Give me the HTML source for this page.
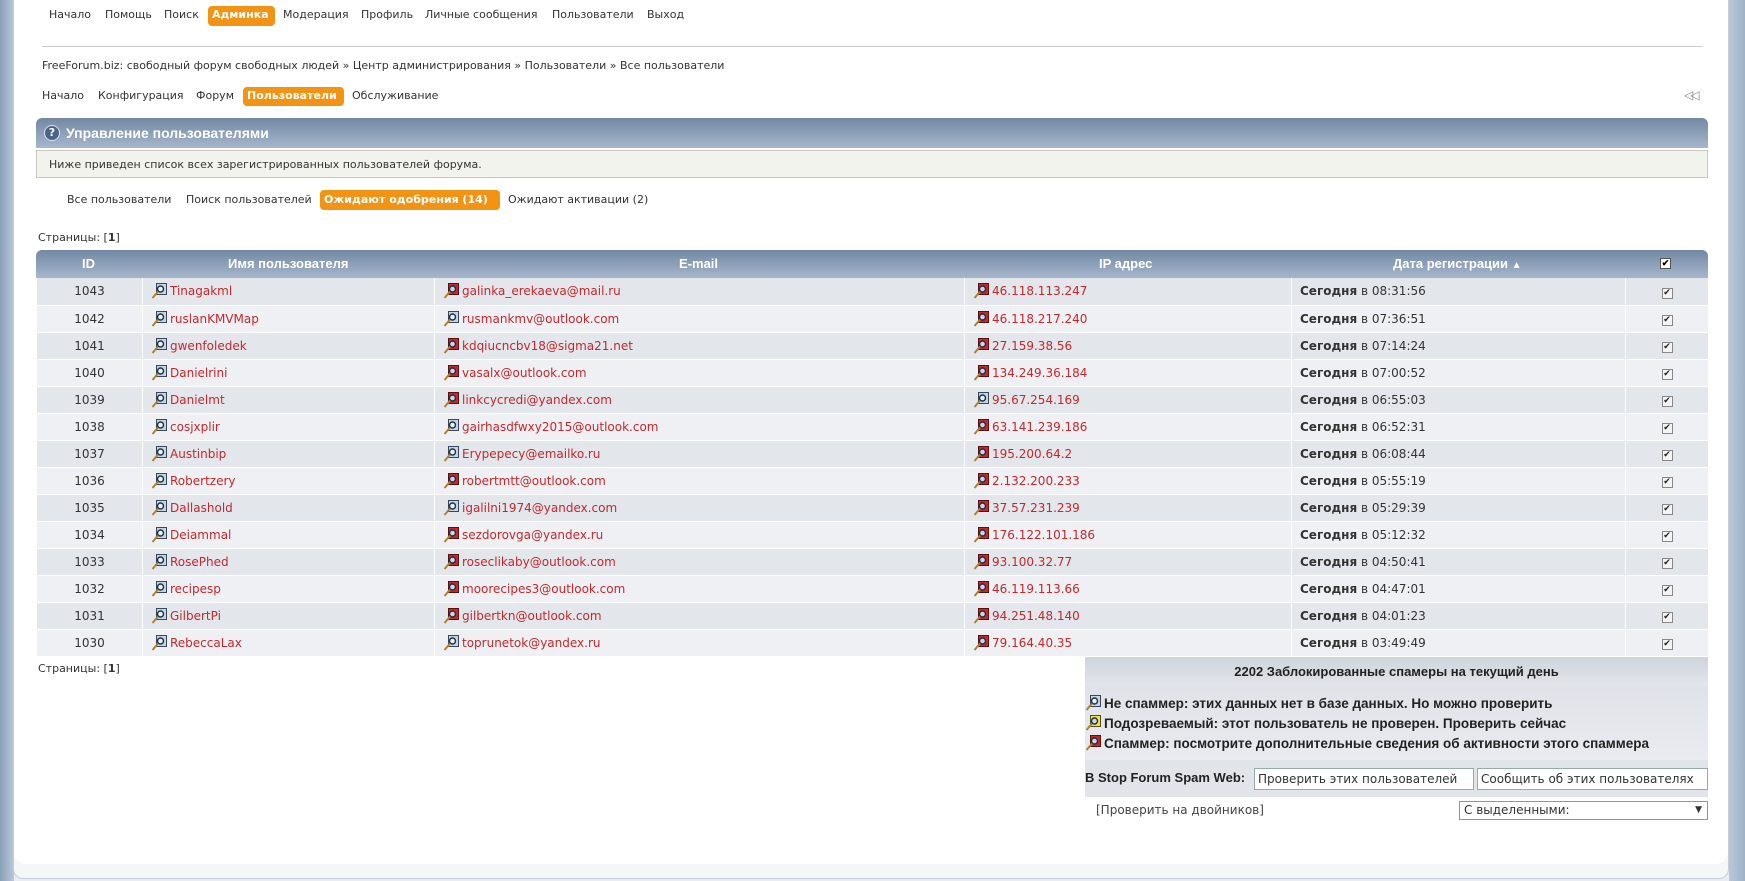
<!DOCTYPE html>
<html><head><meta charset="utf-8"><style>
*{box-sizing:border-box;margin:0;padding:0}
body{width:1745px;height:881px;overflow:hidden;background:linear-gradient(90deg,#8aa0b8 0,#b9c8d8 14px,#e9edf2 14px,#e9edf2 1729px,#b9c8d8 1729px,#9fb2c6 1745px);font-family:"DejaVu Sans","Liberation Sans",sans-serif;font-size:11px;color:#333;position:relative}
.outer{position:absolute;left:13px;top:0;width:1716px;height:879px;background:#f4f6f8;border:1px solid #c8ced6;border-top:none;border-radius:0 0 10px 10px}
.inner{position:absolute;left:14px;top:0;width:1714px;height:864px;background:#fff;border-radius:0 0 12px 12px}
.a{position:absolute;white-space:nowrap}
.btn{background:#f39314;color:#fff;font-weight:bold;border-radius:4px;padding:2px 4px}
.hdr{position:absolute;left:36px;width:1672px;background:linear-gradient(#7388a4,#a6b7cc);border-radius:6px 6px 0 0;color:#fff;font-weight:bold;font-family:"Liberation Sans",sans-serif}
table{position:absolute;left:36px;top:278px;width:1672px;border-collapse:collapse;table-layout:fixed}
td{height:27px;border:1px solid #fff;border-top:none;font-size:12px;padding:0 0 0 8px;white-space:nowrap;vertical-align:middle}
tr:nth-child(odd) td{background:#e3e6eb}
tr:nth-child(even) td{background:#eef0f3}
td.c{text-align:center;padding:0}
a{color:#c4282d;text-decoration:none}
.ic{display:inline-block;width:16px;height:18px;vertical-align:-5px;margin-right:3px}
.ck{display:inline-block;width:11px;height:11px;border:1px solid #888;background:#f4f4f4;font-size:9px;line-height:9px;text-align:center;color:#222}
</style></head><body>
<div class="outer"></div><div class="inner"></div>
<svg width="0" height="0" style="position:absolute"><defs>
<g id="ib"><rect x="5.5" y="1.5" width="10" height="11" fill="#c7d4e4" stroke="#38485c"/><circle cx="9.5" cy="7" r="3" fill="#e8f0fa" stroke="#203040" stroke-width="1.4"/><line x1="7" y1="9.5" x2="1.5" y2="16" stroke="#b08030" stroke-width="2"/></g>
<g id="ir"><rect x="5.5" y="1.5" width="10" height="11" fill="#c8262a" stroke="#5a1010"/><circle cx="9.5" cy="7" r="3" fill="#c8d8ec" stroke="#203040" stroke-width="1.4"/><line x1="7" y1="9.5" x2="1.5" y2="16" stroke="#b08030" stroke-width="2"/></g>
<g id="iy"><rect x="5.5" y="1.5" width="10" height="11" fill="#f0e040" stroke="#505020"/><circle cx="9.5" cy="7" r="3" fill="#c8d8ec" stroke="#203040" stroke-width="1.4"/><line x1="7" y1="9.5" x2="1.5" y2="16" stroke="#b08030" stroke-width="2"/></g>
</defs></svg>

<div class="a" style="left:49px;top:8px">Начало</div>
<div class="a" style="left:105px;top:8px">Помощь</div>
<div class="a" style="left:164px;top:8px">Поиск</div>
<div class="a btn" style="left:208px;top:6px;width:67px;height:20px;font-size:11px">Админка</div>
<div class="a" style="left:283px;top:8px">Модерация</div>
<div class="a" style="left:361px;top:8px">Профиль</div>
<div class="a" style="left:425px;top:8px">Личные сообщения</div>
<div class="a" style="left:552px;top:8px">Пользователи</div>
<div class="a" style="left:647px;top:8px">Выход</div>
<div class="a" style="left:42px;top:46px;width:1661px;height:1px;background:#ccc"></div>
<div class="a" style="left:42px;top:59px">FreeForum.biz: свободный форум свободных людей » Центр администрирования » Пользователи » Все пользователи</div>
<div class="a" style="left:42px;top:89px">Начало</div>
<div class="a" style="left:98px;top:89px">Конфигурация</div>
<div class="a" style="left:196px;top:89px">Форум</div>
<div class="a btn" style="left:243px;top:87px;width:101px;height:19px">Пользователи</div>
<div class="a" style="left:352px;top:89px">Обслуживание</div>
<div class="a" style="left:1684px;top:88px;color:#888;font-size:12px;letter-spacing:-3px">◁◁</div>

<div class="hdr" style="top:118px;height:30px;font-size:14px;line-height:30px;padding-left:30px">Управление пользователями</div>
<div class="a" style="left:44px;top:125px;width:16px;height:16px;border-radius:50%;background:#4a6488;border:1px solid #dde;color:#fff;font-size:11px;font-weight:bold;text-align:center;line-height:14px">?</div>
<div class="a" style="left:36px;top:150px;width:1672px;height:28px;background:#f3f3ee;border:1px solid #c8c8c0"></div>
<div class="a" style="left:49px;top:158px">Ниже приведен список всех зарегистрированных пользователей форума.</div>

<div class="a" style="left:67px;top:193px">Все пользователи</div>
<div class="a" style="left:186px;top:193px">Поиск пользователей</div>
<div class="a btn" style="left:320px;top:190px;width:180px;height:20px;padding-top:3px">Ожидают одобрения (14)</div>
<div class="a" style="left:508px;top:193px">Ожидают активации (2)</div>
<div class="a" style="left:38px;top:231px">Страницы: [<b>1</b>]</div>

<div class="hdr" style="top:250px;height:28px;font-size:13px;line-height:28px">
<span class="a" style="left:46px">ID</span><span class="a" style="left:192px">Имя пользователя</span><span class="a" style="left:643px">E-mail</span><span class="a" style="left:1063px">IP адрес</span><span class="a" style="left:1357px">Дата регистрации <span style="font-size:10px">▲</span></span><span class="a" style="left:1624px;top:8px;width:11px;height:11px;background:#fff;border:1px solid #555;color:#000;font-size:9px;line-height:9px;text-align:center">✔</span>
</div>

<table>
<colgroup><col style="width:106px"><col style="width:292px"><col style="width:530px"><col style="width:327px"><col style="width:334px"><col style="width:83px"></colgroup>
<tbody>
<tr><td class="c">1043</td><td><svg class="ic"><use href="#ib"/></svg><a>Tinagakml</a></td><td><svg class="ic"><use href="#ir"/></svg><a>galinka_erekaeva@mail.ru</a></td><td><svg class="ic"><use href="#ir"/></svg><a>46.118.113.247</a></td><td><b>Сегодня</b> в 08:31:56</td><td class="c"><span class="ck">✔</span></td></tr>
<tr><td class="c">1042</td><td><svg class="ic"><use href="#ib"/></svg><a>ruslanKMVMap</a></td><td><svg class="ic"><use href="#ib"/></svg><a>rusmankmv@outlook.com</a></td><td><svg class="ic"><use href="#ir"/></svg><a>46.118.217.240</a></td><td><b>Сегодня</b> в 07:36:51</td><td class="c"><span class="ck">✔</span></td></tr>
<tr><td class="c">1041</td><td><svg class="ic"><use href="#ib"/></svg><a>gwenfoledek</a></td><td><svg class="ic"><use href="#ir"/></svg><a>kdqiucncbv18@sigma21.net</a></td><td><svg class="ic"><use href="#ir"/></svg><a>27.159.38.56</a></td><td><b>Сегодня</b> в 07:14:24</td><td class="c"><span class="ck">✔</span></td></tr>
<tr><td class="c">1040</td><td><svg class="ic"><use href="#ib"/></svg><a>Danielrini</a></td><td><svg class="ic"><use href="#ir"/></svg><a>vasalx@outlook.com</a></td><td><svg class="ic"><use href="#ir"/></svg><a>134.249.36.184</a></td><td><b>Сегодня</b> в 07:00:52</td><td class="c"><span class="ck">✔</span></td></tr>
<tr><td class="c">1039</td><td><svg class="ic"><use href="#ib"/></svg><a>Danielmt</a></td><td><svg class="ic"><use href="#ir"/></svg><a>linkcycredi@yandex.com</a></td><td><svg class="ic"><use href="#ib"/></svg><a>95.67.254.169</a></td><td><b>Сегодня</b> в 06:55:03</td><td class="c"><span class="ck">✔</span></td></tr>
<tr><td class="c">1038</td><td><svg class="ic"><use href="#ib"/></svg><a>cosjxplir</a></td><td><svg class="ic"><use href="#ib"/></svg><a>gairhasdfwxy2015@outlook.com</a></td><td><svg class="ic"><use href="#ir"/></svg><a>63.141.239.186</a></td><td><b>Сегодня</b> в 06:52:31</td><td class="c"><span class="ck">✔</span></td></tr>
<tr><td class="c">1037</td><td><svg class="ic"><use href="#ib"/></svg><a>Austinbip</a></td><td><svg class="ic"><use href="#ib"/></svg><a>Erypepecy@emailko.ru</a></td><td><svg class="ic"><use href="#ir"/></svg><a>195.200.64.2</a></td><td><b>Сегодня</b> в 06:08:44</td><td class="c"><span class="ck">✔</span></td></tr>
<tr><td class="c">1036</td><td><svg class="ic"><use href="#ib"/></svg><a>Robertzery</a></td><td><svg class="ic"><use href="#ir"/></svg><a>robertmtt@outlook.com</a></td><td><svg class="ic"><use href="#ir"/></svg><a>2.132.200.233</a></td><td><b>Сегодня</b> в 05:55:19</td><td class="c"><span class="ck">✔</span></td></tr>
<tr><td class="c">1035</td><td><svg class="ic"><use href="#ib"/></svg><a>Dallashold</a></td><td><svg class="ic"><use href="#ib"/></svg><a>igalilni1974@yandex.com</a></td><td><svg class="ic"><use href="#ir"/></svg><a>37.57.231.239</a></td><td><b>Сегодня</b> в 05:29:39</td><td class="c"><span class="ck">✔</span></td></tr>
<tr><td class="c">1034</td><td><svg class="ic"><use href="#ib"/></svg><a>Deiammal</a></td><td><svg class="ic"><use href="#ir"/></svg><a>sezdorovga@yandex.ru</a></td><td><svg class="ic"><use href="#ir"/></svg><a>176.122.101.186</a></td><td><b>Сегодня</b> в 05:12:32</td><td class="c"><span class="ck">✔</span></td></tr>
<tr><td class="c">1033</td><td><svg class="ic"><use href="#ib"/></svg><a>RosePhed</a></td><td><svg class="ic"><use href="#ir"/></svg><a>roseclikaby@outlook.com</a></td><td><svg class="ic"><use href="#ir"/></svg><a>93.100.32.77</a></td><td><b>Сегодня</b> в 04:50:41</td><td class="c"><span class="ck">✔</span></td></tr>
<tr><td class="c">1032</td><td><svg class="ic"><use href="#ib"/></svg><a>recipesp</a></td><td><svg class="ic"><use href="#ir"/></svg><a>moorecipes3@outlook.com</a></td><td><svg class="ic"><use href="#ir"/></svg><a>46.119.113.66</a></td><td><b>Сегодня</b> в 04:47:01</td><td class="c"><span class="ck">✔</span></td></tr>
<tr><td class="c">1031</td><td><svg class="ic"><use href="#ib"/></svg><a>GilbertPi</a></td><td><svg class="ic"><use href="#ir"/></svg><a>gilbertkn@outlook.com</a></td><td><svg class="ic"><use href="#ir"/></svg><a>94.251.48.140</a></td><td><b>Сегодня</b> в 04:01:23</td><td class="c"><span class="ck">✔</span></td></tr>
<tr><td class="c">1030</td><td><svg class="ic"><use href="#ib"/></svg><a>RebeccaLax</a></td><td><svg class="ic"><use href="#ib"/></svg><a>toprunetok@yandex.ru</a></td><td><svg class="ic"><use href="#ir"/></svg><a>79.164.40.35</a></td><td><b>Сегодня</b> в 03:49:49</td><td class="c"><span class="ck">✔</span></td></tr>
</tbody></table>

<div class="a" style="left:38px;top:662px">Страницы: [<b>1</b>]</div>

<div class="a" style="left:1085px;top:657px;width:623px;height:29px;background:linear-gradient(#cfd4db,#e2e5ea);font-family:'Liberation Sans',sans-serif;font-weight:bold;font-size:13px;text-align:center;line-height:29px;color:#222">2202 Заблокированные спамеры на текущий день</div>
<div class="a" style="left:1085px;top:686px;width:623px;height:74px;background:linear-gradient(#dfe2e8,#e9ebef);font-family:'Liberation Sans',sans-serif;font-weight:bold;font-size:13.5px;color:#222;line-height:20px;padding-top:8px">
<div><svg class="ic" style="vertical-align:-4px"><use href="#ib"/></svg>Не спаммер: этих данных нет в базе данных. Но можно проверить</div>
<div><svg class="ic" style="vertical-align:-4px"><use href="#iy"/></svg>Подозреваемый: этот пользователь не проверен. Проверить сейчас</div>
<div><svg class="ic" style="vertical-align:-4px"><use href="#ir"/></svg>Спаммер: посмотрите дополнительные сведения об активности этого спаммера</div>
</div>
<div class="a" style="left:1085px;top:760px;width:623px;height:37px;background:#e1e4e9"></div>
<div class="a" style="left:1085px;top:770px;font-family:'Liberation Sans',sans-serif;font-weight:bold;font-size:13px;color:#222">B Stop Forum Spam Web:</div>
<div class="a" style="left:1254px;top:768px;width:220px;height:22px;background:#fff;border:1px solid #9aa;font-size:12px;line-height:20px;padding-left:3px;overflow:hidden">Проверить этих пользователей</div>
<div class="a" style="left:1477px;top:768px;width:231px;height:22px;background:#fff;border:1px solid #9aa;font-size:12px;line-height:20px;padding-left:3px;overflow:hidden">Сообщить об этих пользователях</div>
<div class="a" style="left:1096px;top:803px;font-size:12px;color:#444">[Проверить на двойников]</div>
<div class="a" style="left:1459px;top:801px;width:249px;height:19px;background:#fff;border:1px solid #8a9aaa;font-size:12px;line-height:17px;padding-left:4px">С выделенными:<span style="position:absolute;right:5px;font-size:9px">▼</span></div>
</body></html>
